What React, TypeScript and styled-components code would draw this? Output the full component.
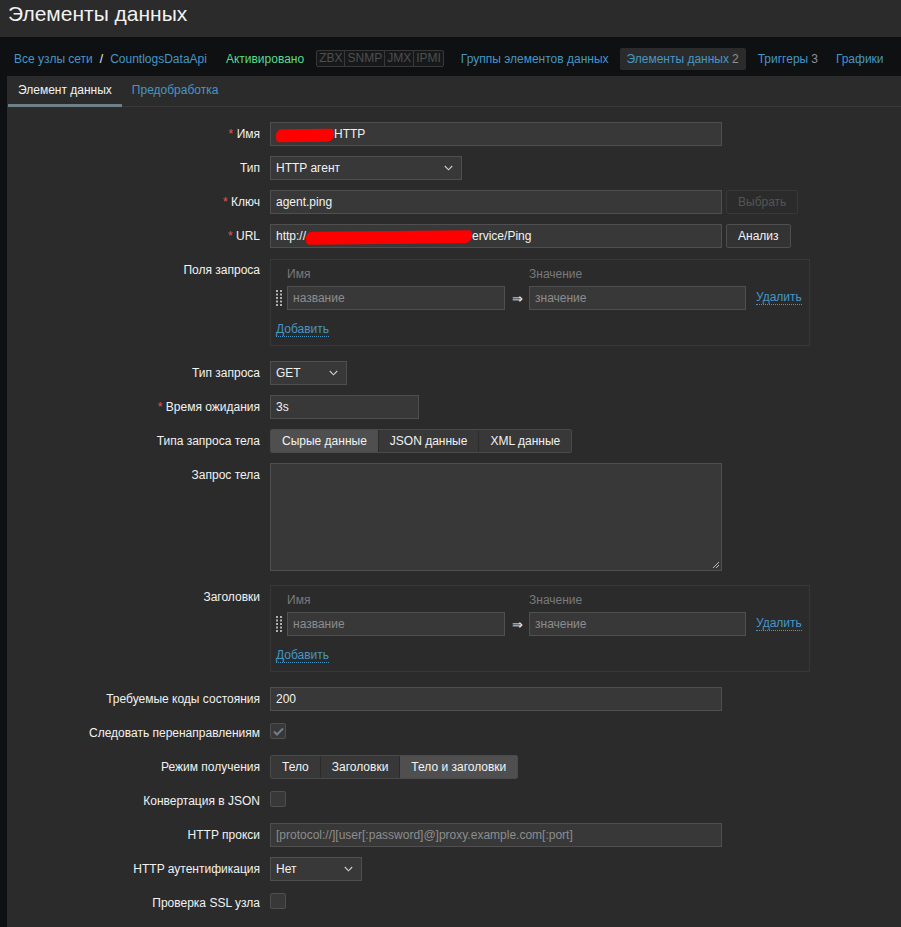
import React from 'react';
import styled, { createGlobalStyle } from 'styled-components';

const GlobalStyle = createGlobalStyle`
  body {
    margin: 0;
    background: #0e1012;
    font-family: "Liberation Sans", Arial, sans-serif;
    font-size: 12px;
    color: #f2f2f2;
  }
  * { box-sizing: border-box; }
`;

const Header = styled.header`
  height: 37px;
  padding: 2px 8px 0;
  background: #2b2b2b;

  h1 {
    margin: 0;
    font-size: 21px;
    font-weight: normal;
    color: #f2f2f2;
  }
`;

const NavBar = styled.nav`
  height: 39px;
  display: flex;
  align-items: center;
  padding: 4px 0 0 14px;
  background: #0e1012;
`;

const Link = styled.a`
  color: #4796c4;
  text-decoration: none;
  white-space: nowrap;
`;

const Slash = styled.span`
  margin: 0 7px;
  color: #f2f2f2;
`;

const Status = styled.span`
  margin: 0 12px 0 19px;
  color: #59db8f;
`;

const TagGroup = styled.span`
  display: inline-flex;
  height: 17px;
  margin-right: 10px;
  border: 1px solid #383838;
  border-radius: 2px;
  background: #161819;
`;

const Tag = styled.span`
  padding: 0 2px;
  line-height: 15px;
  color: #4f4f4f;
  & + & { border-left: 1px solid #383838; }
`;

const NavItem = styled.a<{ $active?: boolean }>`
  display: inline-flex;
  align-items: center;
  height: 22px;
  margin-right: ${p => (p.$active ? '5px' : '4px')};
  padding: 0 7px;
  border-radius: 2px;
  color: #4796c4;
  background: ${p => (p.$active ? '#2b2b2b' : 'transparent')};
  white-space: nowrap;
`;

const Count = styled.span`
  margin-left: 3px;
  color: #8f8f8f;
`;

const Content = styled.main`
  margin-left: 7px;
  min-height: 851px;
  background: #2b2b2b;
`;

const Tabs = styled.div`
  display: flex;
  height: 31px;
  border-bottom: 1px solid #383838;
`;

const Tab = styled.span<{ $active?: boolean }>`
  display: flex;
  align-items: center;
  margin-left: ${p => (p.$active ? '1px' : '0')};
  margin-bottom: -1px;
  padding: 0 10px 1px;
  border-bottom: 3px solid ${p => (p.$active ? '#6f7f87' : 'transparent')};
  color: ${p => (p.$active ? '#f2f2f2' : '#4796c4')};
`;

const Form = styled.div`
  display: grid;
  grid-template-columns: 253px 1fr;
  column-gap: 10px;
  row-gap: 10px;
  padding: 15px 0 20px;
`;

const Label = styled.label<{ $required?: boolean }>`
  line-height: 24px;
  text-align: right;
  white-space: nowrap;

  &::before {
    content: ${p => (p.$required ? "'* '" : "''")};
    color: #e45959;
  }
`;

const Field = styled.div`
  display: flex;
  align-items: flex-start;
  gap: 4px;
  min-height: 24px;
`;

const Input = styled.div<{ $w: number; $placeholder?: boolean }>`
  display: flex;
  align-items: center;
  width: ${p => p.$w}px;
  height: 24px;
  padding: 0 5px;
  border: 1px solid #4f4f4f;
  background: #383838;
  color: ${p => (p.$placeholder ? '#8d8d8d' : '#f2f2f2')};
  white-space: nowrap;
  overflow: hidden;
`;

const Redact = styled.span<{ $w: number }>`
  display: inline-block;
  width: ${p => p.$w}px;
  height: 13px;
  margin-top: 2px;
  border-radius: 6px 3px 7px 4px;
  background: #ff0000;
  transform: rotate(-0.6deg);
`;

const Select = styled(Input)`
  justify-content: space-between;
  padding-right: 8px;
`;

const Button = styled.span<{ $disabled?: boolean }>`
  display: inline-flex;
  align-items: center;
  height: 24px;
  padding: 0 11px;
  border: 1px solid ${p => (p.$disabled ? '#383838' : '#4f4f4f')};
  border-radius: 2px;
  background: ${p => (p.$disabled ? '#2b2b2b' : '#333333')};
  color: ${p => (p.$disabled ? '#555555' : '#f2f2f2')};
`;

const PairBox = styled.div<{ $first?: boolean }>`
  width: 540px;
  height: 87px;
  margin-top: ${p => (p.$first ? '1px' : '0')};
  margin-bottom: 5px;
  padding: 4px 0 0 4px;
  border: 1px solid #383838;
`;

const PairHead = styled.div`
  display: grid;
  grid-template-columns: 12px 218px 24px 217px;
  height: 22px;
  line-height: 20px;
  color: #7a7a7a;
`;

const PairRow = styled.div`
  display: grid;
  grid-template-columns: 12px 218px 24px 217px auto;
  align-items: center;
`;

const Handle = styled.svg`
  display: block;
`;

const Arrow = styled.span`
  text-align: center;
  font-size: 13px;
  color: #f2f2f2;
`;

const DottedLink = styled.a`
  justify-self: start;
  margin-left: 10px;
  color: #4796c4;
  line-height: 13px;
  border-bottom: 1px dotted #4796c4;
`;

const AddLink = styled(DottedLink)`
  display: inline-block;
  margin: 13px 0 0 1px;
`;

const TextArea = styled.div`
  position: relative;
  width: 452px;
  height: 108px;
  margin-bottom: 4px;
  border: 1px solid #4f4f4f;
  background: #383838;
`;

const Grip = styled.svg`
  position: absolute;
  right: 1px;
  bottom: 1px;
`;

const Segmented = styled.div`
  display: inline-flex;
  height: 24px;
  border: 1px solid #4a4a4a;
  border-radius: 2px;
  overflow: hidden;
`;

const Segment = styled.span<{ $on?: boolean }>`
  display: flex;
  align-items: center;
  padding: 0 11px;
  background: ${p => (p.$on ? '#4f4f4f' : '#383838')};
  color: #f2f2f2;
  & + & { border-left: 1px solid #2b2b2b; }
`;

const Check = styled.span`
  display: inline-flex;
  align-items: center;
  justify-content: center;
  width: 16px;
  height: 16px;
  margin-top: 2px;
  border: 1px solid #4f4f4f;
  border-radius: 2px;
  background: #383838;
`;

const Chevron = () => (
  <svg width="9" height="6" viewBox="0 0 9 6">
    <path d="M0.8 1 L4.5 4.8 L8.2 1" fill="none" stroke="#d0d0d0" strokeWidth="1.1" />
  </svg>
);

const DragHandle = () => (
  <Handle width="8" height="18" viewBox="0 0 8 18">
    {[0, 1, 2, 3, 4].map(i => (
      <g key={i} fill="#b0b0b0">
        <rect x="1" y={1 + i * 3.5} width="2" height="2" />
        <rect x="5" y={1 + i * 3.5} width="2" height="2" />
      </g>
    ))}
  </Handle>
);

const PairTable: React.FC<{ first?: boolean }> = ({ first }) => (
  <PairBox $first={first}>
    <PairHead>
      <span />
      <span>Имя</span>
      <span />
      <span>Значение</span>
    </PairHead>
    <PairRow>
      <DragHandle />
      <Input $w={218} $placeholder>название</Input>
      <Arrow>⇒</Arrow>
      <Input $w={217} $placeholder>значение</Input>
      <DottedLink>Удалить</DottedLink>
    </PairRow>
    <AddLink>Добавить</AddLink>
  </PairBox>
);

const navItems = [
  { name: 'Группы элементов данных' },
  { name: 'Элементы данных', count: 2, active: true },
  { name: 'Триггеры', count: 3 },
  { name: 'Графики' },
];

export default function App() {
  return (
    <>
      <GlobalStyle />
      <Header>
        <h1>Элементы данных</h1>
      </Header>
      <NavBar>
        <Link>Все узлы сети</Link>
        <Slash>/</Slash>
        <Link>CountlogsDataApi</Link>
        <Status>Активировано</Status>
        <TagGroup>
          {['ZBX', 'SNMP', 'JMX', 'IPMI'].map(t => (
            <Tag key={t}>{t}</Tag>
          ))}
        </TagGroup>
        {navItems.map(n => (
          <NavItem key={n.name} $active={n.active}>
            {n.name}
            {n.count && <Count>{n.count}</Count>}
          </NavItem>
        ))}
      </NavBar>
      <Content>
        <Tabs>
          <Tab $active>Элемент данных</Tab>
          <Tab>Предобработка</Tab>
        </Tabs>
        <Form>
          <Label $required>Имя</Label>
          <Field>
            <Input $w={452}>
              <Redact $w={58} />
              HTTP
            </Input>
          </Field>

          <Label>Тип</Label>
          <Field>
            <Select $w={192}>
              HTTP агент
              <Chevron />
            </Select>
          </Field>

          <Label $required>Ключ</Label>
          <Field>
            <Input $w={452}>agent.ping</Input>
            <Button $disabled>Выбрать</Button>
          </Field>

          <Label $required>URL</Label>
          <Field>
            <Input $w={452}>
              http://
              <Redact $w={166} />
              ervice/Ping
            </Input>
            <Button>Анализ</Button>
          </Field>

          <Label>Поля запроса</Label>
          <Field>
            <PairTable first />
          </Field>

          <Label>Тип запроса</Label>
          <Field>
            <Select $w={77}>
              GET
              <Chevron />
            </Select>
          </Field>

          <Label $required>Время ожидания</Label>
          <Field>
            <Input $w={149}>3s</Input>
          </Field>

          <Label>Типа запроса тела</Label>
          <Field>
            <Segmented>
              <Segment $on>Сырые данные</Segment>
              <Segment>JSON данные</Segment>
              <Segment>XML данные</Segment>
            </Segmented>
          </Field>

          <Label>Запрос тела</Label>
          <Field>
            <TextArea>
              <Grip width="9" height="9" viewBox="0 0 9 9">
                <path d="M8 2 L2 8 M8 5 L5 8" stroke="#bdbdbd" strokeWidth="1" />
              </Grip>
            </TextArea>
          </Field>

          <Label>Заголовки</Label>
          <Field>
            <PairTable />
          </Field>

          <Label>Требуемые коды состояния</Label>
          <Field>
            <Input $w={452}>200</Input>
          </Field>

          <Label>Следовать перенаправлениям</Label>
          <Field>
            <Check>
              <svg width="11" height="9" viewBox="0 0 11 9">
                <path d="M1 4.5 L4 7.5 L10 1.5" fill="none" stroke="#6d7f8b" strokeWidth="2" />
              </svg>
            </Check>
          </Field>

          <Label>Режим получения</Label>
          <Field>
            <Segmented>
              <Segment>Тело</Segment>
              <Segment>Заголовки</Segment>
              <Segment $on>Тело и заголовки</Segment>
            </Segmented>
          </Field>

          <Label>Конвертация в JSON</Label>
          <Field>
            <Check />
          </Field>

          <Label>HTTP прокси</Label>
          <Field>
            <Input $w={452} $placeholder>
              [protocol://][user[:password]@]proxy.example.com[:port]
            </Input>
          </Field>

          <Label>HTTP аутентификация</Label>
          <Field>
            <Select $w={92}>
              Нет
              <Chevron />
            </Select>
          </Field>

          <Label>Проверка SSL узла</Label>
          <Field>
            <Check />
          </Field>
        </Form>
      </Content>
    </>
  );
}
